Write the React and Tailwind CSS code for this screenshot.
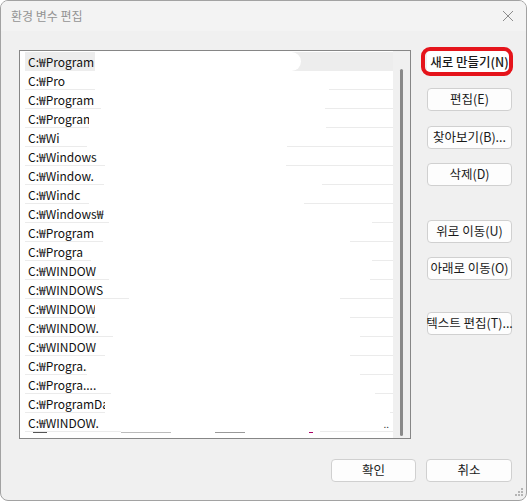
import React from 'react';

const font = { fontFamily: '"Noto Sans CJK KR", "Noto Sans", sans-serif' };

// visible part of each path, plus where the faint row lines run
const rows = [
    { t: 'C:₩Program', l: 0, r: 390 },
    { t: 'C:₩Pro', l: 70, r: 309 },
    { t: 'C:₩Program', l: 76, r: 305 },
    { t: 'C:₩Program', l: 64, r: 306 },
    { t: 'C:₩Wi', l: 62, r: 267 },
    { t: 'C:₩Windows', l: 80, r: 266 },
    { t: 'C:₩Window.', l: 79, r: 302 },
    { t: 'C:₩Windc', l: 64, r: 284 },
    { t: 'C:₩Windows₩', l: 84, r: 352 },
    { t: 'C:₩Program', l: 78, r: 330 },
    { t: 'C:₩Progra', l: 66, r: 352 },
    { t: 'C:₩WINDOW', l: 84, r: 350 },
    { t: 'C:₩WINDOWS', l: 104, r: 320 },
    { t: 'C:₩WINDOWS', l: 70, r: 330 },
    { t: 'C:₩WINDOW.', l: 88, r: 340 },
    { t: 'C:₩WINDOW', l: 80, r: 330 },
    { t: 'C:₩Progra..', l: 62, r: 340 },
    { t: 'C:₩Progra....', l: 86, r: 355 },
    { t: 'C:₩ProgramDa', l: 80, r: 370 },
    { t: 'C:₩WINDOW.', l: 96, r: 300 },
];

function Btn({ children, className = '' }) {
    return (
        <button className={`h-[23px] w-[85px] rounded-[4px] border border-[#d0d0d0] bg-[#fdfdfd] text-[12.5px] leading-none text-[#1a1a1a] flex items-center justify-center whitespace-nowrap ${className}`}>
            {children}
        </button>
    );
}

export default function App() {
    return (
        <div style={font} className="w-[527px] h-[501px] bg-[#f0f0f0] border border-[#a2a2a2] rounded-[8px] overflow-hidden flex flex-col relative">
            {/* title bar */}
            <div className="h-[30px] bg-[#f3f3f3] flex items-center justify-between pl-[10px] pr-[12px] shrink-0">
                <span className="text-[12px] text-[#939393]">환경 변수 편집</span>
                <svg width="12" height="12" viewBox="0 0 12 12" className="text-[#8c8c8c]">
                    <path d="M1 1 L11 11 M11 1 L1 11" stroke="currentColor" strokeWidth="1" />
                </svg>
            </div>

            <div className="flex pt-[19px] pl-[18px]">
                {/* path list */}
                <div className="w-[392px] h-[389px] bg-white border border-[#868686] flex overflow-hidden">
                    <div className="flex-1 pt-[1px] pl-[5px] overflow-hidden">
                        {rows.map((row, i) => (
                            <div key={i} className={`relative h-[19px] flex items-center pl-[3px] text-[12px] text-[#111] whitespace-nowrap ${i === 0 ? 'bg-[#ededed]' : ''}`}>
                                <span className="relative z-0">{row.t}</span>
                                {i === 0 && (
                                    <div className="absolute left-[70px] top-0 w-[206px] h-[19px] bg-white rounded-r-[10px]" />
                                )}
                                {i > 0 && (
                                    <>
                                        <div className="absolute bottom-0 left-0 h-px bg-[#ebebeb]" style={{ width: row.l }} />
                                        <div className="absolute bottom-0 right-0 h-px bg-[#ebebeb]" style={{ left: row.r - 5 }} />
                                        <div className="absolute top-0 bottom-px bg-white" style={{ left: row.l, right: 0 }} />
                                    </>
                                )}
                                {i === 19 && (
                                    <span className="absolute right-[4px] top-[3px] text-[10px] text-[#333]">..</span>
                                )}
                            </div>
                        ))}
                        {/* next row, only its top edge shows */}
                        <div className="relative h-[3px] overflow-hidden">
                            <div className="absolute left-[8px] top-0 flex gap-[4px]">
                                <div className="w-[14px] h-[1px] bg-[#555]" />
                                <div className="w-[50px] h-[1px] bg-[#bbb] ml-[70px]" />
                                <div className="w-[30px] h-[1px] bg-[#999] ml-[40px]" />
                                <div className="w-[4px] h-[1px] bg-[#a06] ml-[60px]" />
                            </div>
                        </div>
                    </div>
                    {/* scrollbar */}
                    <div className="w-[17px] bg-[#f0f0f0] flex justify-center pt-[18px] pb-[2px]">
                        <div className="w-[3px] h-full bg-[#8a8a8a] rounded-full" />
                    </div>
                </div>

                {/* side buttons */}
                <div className="ml-[16px] flex flex-col">
                    <div className="relative mt-[1px]">
                        <Btn className="border-transparent bg-white font-medium">새로 만들기(N)</Btn>
                        <div className="absolute left-[-6px] top-[-4px] right-[-1px] bottom-[-2px] border-[4px] border-[#e5141b] rounded-[9px] pointer-events-none" />
                    </div>
                    <Btn className="mt-[14px]">편집(E)</Btn>
                    <Btn className="mt-[15px]">찾아보기(B)...</Btn>
                    <Btn className="mt-[14px]">삭제(D)</Btn>
                    <Btn className="mt-[34px]">위로 이동(U)</Btn>
                    <Btn className="mt-[14px]">아래로 이동(O)</Btn>
                    <Btn className="mt-[32px]">텍스트 편집(T)...</Btn>
                </div>
            </div>

            {/* bottom buttons */}
            <div className="flex justify-end gap-[10px] pr-[14px] mt-[20px]">
                <Btn>확인</Btn>
                <Btn className="w-[86px]">취소</Btn>
            </div>

            {/* resize grip */}
            <svg width="10" height="10" viewBox="0 0 10 10" className="absolute right-[3px] bottom-[3px]">
                {[[8, 0], [5, 3], [8, 3], [2, 6], [5, 6], [8, 6]].map(([x, y], i) => (
                    <rect key={i} x={x} y={y + 1} width="2" height="2" fill="#b5b5b5" />
                ))}
            </svg>
        </div>
    );
}
